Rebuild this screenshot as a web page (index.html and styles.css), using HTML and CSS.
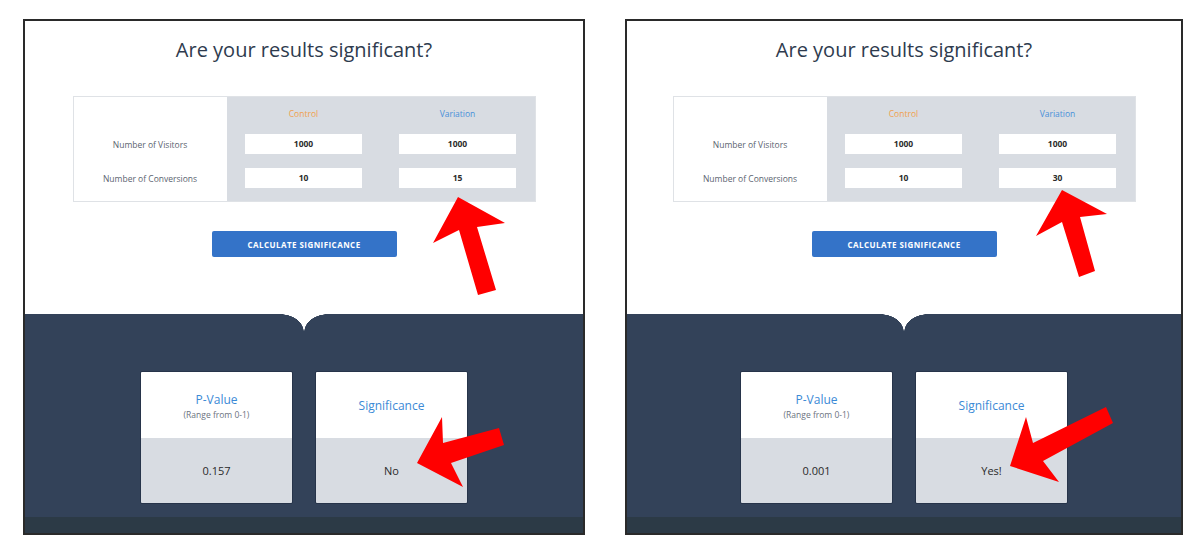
FILE: index.html
```html
<!DOCTYPE html>
<html lang="en">
<head>
    <meta charset="UTF-8">
    <meta name="viewport" content="width=device-width, initial-scale=1.0">
    <title>Significance Calculator</title>
    <link rel="stylesheet" href="styles.css">
</head>
<body>
    <div class="shots">
        <div class="panel panel-wide">
            <div class="calc">
                <h1>Are your results significant?</h1>
                <div class="table">
                    <div class="labels">
                        <span></span>
                        <span>Number of Visitors</span>
                        <span>Number of Conversions</span>
                    </div>
                    <div class="fields">
                        <span class="head control">Control</span>
                        <span class="head variation">Variation</span>
                        <span class="field">1000</span>
                        <span class="field">1000</span>
                        <span class="field">10</span>
                        <span class="field">15</span>
                    </div>
                </div>
                <button class="calc-btn">Calculate Significance</button>
            </div>
            <div class="results">
                <div class="card">
                    <div class="card-top">
                        <div class="card-title">P-Value</div>
                        <div class="card-sub">(Range from 0-1)</div>
                    </div>
                    <div class="card-value">0.157</div>
                </div>
                <div class="card">
                    <div class="card-top">
                        <div class="card-title">Significance</div>
                    </div>
                    <div class="card-value">No</div>
                </div>
            </div>
            <div class="footer"></div>
        </div>

        <div class="panel">
            <div class="calc">
                <h1>Are your results significant?</h1>
                <div class="table">
                    <div class="labels">
                        <span></span>
                        <span>Number of Visitors</span>
                        <span>Number of Conversions</span>
                    </div>
                    <div class="fields">
                        <span class="head control">Control</span>
                        <span class="head variation">Variation</span>
                        <span class="field">1000</span>
                        <span class="field">1000</span>
                        <span class="field">10</span>
                        <span class="field">30</span>
                    </div>
                </div>
                <button class="calc-btn">Calculate Significance</button>
            </div>
            <div class="results">
                <div class="card">
                    <div class="card-top">
                        <div class="card-title">P-Value</div>
                        <div class="card-sub">(Range from 0-1)</div>
                    </div>
                    <div class="card-value">0.001</div>
                </div>
                <div class="card">
                    <div class="card-top">
                        <div class="card-title">Significance</div>
                    </div>
                    <div class="card-value">Yes!</div>
                </div>
            </div>
            <div class="footer"></div>
        </div>
    </div>

    <!-- red annotation arrows drawn over the screenshots -->
    <svg class="arrows" width="1200" height="554" viewBox="0 0 1200 554">
        <polygon points="458,197 505,223 477,227 496,290 478,295 459,230 433,243" />
        <polygon points="417,463 442,417 443,443 499,428 504,445 451,463 463,487" />
        <polygon points="1062,190 1107,214 1080,217 1095,271 1079,277 1062,222 1036,236" />
        <polygon points="1010,466 1026,417 1033,443 1106,407 1113,423 1043,461 1059,482" />
    </svg>
</body>
</html>
```

FILE: styles.css
```css
body {
    margin: 0;
    background: #fff;
    font-family: "Open Sans", Arial, sans-serif;
    position: relative;
    width: 1200px;
    height: 554px;
    overflow: hidden;
}

.shots {
    display: flex;
    gap: 40px;
    padding: 19px 0 0 23px;
}

.panel {
    box-sizing: border-box;
    width: 558px;
    height: 516px;
    border: 2px solid #2a2a2a;
    display: flex;
    flex-direction: column;
}

.panel-wide {
    width: 562px;
}

.calc {
    height: 293px;
    display: flex;
    flex-direction: column;
    align-items: center;
}

.calc h1 {
    margin: 14px 0 0;
    height: 30px;
    line-height: 30px;
    font-size: 20px;
    font-weight: 400;
    color: #2e3b4e;
}

.table {
    box-sizing: border-box;
    width: 463px;
    height: 106px;
    margin-top: 31px;
    border: 1px solid #dfe2e6;
    display: flex;
}

.labels,
.fields {
    display: grid;
    grid-template-rows: 14px 20px 20px;
    row-gap: 14px;
    padding: 9px 0 13px;
    align-items: center;
}

.labels {
    width: 153px;
    background: #fff;
    text-align: center;
    font-size: 8.5px;
    color: #5b6470;
}

.fields {
    flex: 1;
    background: #d8dce2;
    grid-template-columns: 1fr 1fr;
    justify-items: center;
}

.head {
    font-size: 8.5px;
}

.control {
    color: #f0a04e;
}

.variation {
    color: #4a90d9;
}

.field {
    width: 117px;
    height: 20px;
    line-height: 20px;
    background: #fff;
    text-align: center;
    font-size: 8.5px;
    font-weight: 700;
    color: #2c2c2c;
}

.calc-btn {
    margin-top: 29px;
    width: 185px;
    height: 26px;
    border: none;
    border-radius: 2px;
    background: #3473c8;
    color: #fff;
    font-family: inherit;
    font-size: 8px;
    font-weight: 700;
    letter-spacing: 0.45px;
    text-transform: uppercase;
}

.results {
    position: relative;
    height: 203px;
    box-sizing: border-box;
    padding-top: 57px;
    background: #334259;
    display: flex;
    justify-content: center;
    gap: 22px;
}

/* the white cusp where the two rounded halves meet */
.results::before,
.results::after {
    content: "";
    position: absolute;
    top: 0;
    width: 24px;
    height: 18px;
}

.results::before {
    right: 50%;
    background: radial-gradient(ellipse 24px 18px at 0 100%, transparent 98%, #fff 100%);
}

.results::after {
    left: 50%;
    background: radial-gradient(ellipse 24px 18px at 100% 100%, transparent 98%, #fff 100%);
}

.card {
    box-sizing: border-box;
    width: 153px;
    height: 133px;
    border: 1px solid #27344a;
    border-radius: 2px;
    overflow: hidden;
    display: flex;
    flex-direction: column;
}

.card-top {
    height: 66px;
    background: #fff;
    display: flex;
    flex-direction: column;
    justify-content: center;
    align-items: center;
}

.card-title {
    font-size: 12px;
    color: #3b8ad6;
}

.card-sub {
    margin-top: 1px;
    font-size: 8.5px;
    color: #6b7380;
}

.card-value {
    flex: 1;
    background: #d8dce2;
    display: flex;
    justify-content: center;
    align-items: center;
    font-size: 11px;
    color: #2a2a2a;
}

.footer {
    flex: 1;
    background: #2c3a46;
}

.arrows {
    position: absolute;
    left: 0;
    top: 0;
}

.arrows polygon {
    fill: #ff0000;
}
```
